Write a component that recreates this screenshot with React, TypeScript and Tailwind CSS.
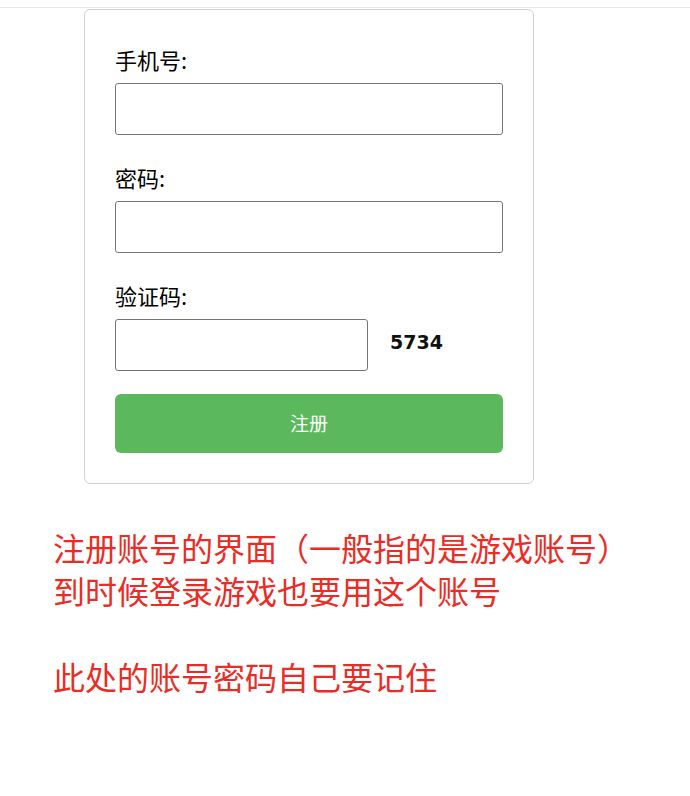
import React, { useState } from 'react';

const Field = ({ label, value, onChange, className }: { label: string; value: string; onChange: (v: string) => void; className?: string }) => (
  <div className={className}>
    <label className="block text-[22px] leading-[28px] text-black">{label}</label>
    <input
      type="text"
      value={value}
      onChange={e => onChange(e.target.value)}
      className="mt-[10px] block w-full h-[52px] px-2 border border-[#767676] rounded-[3px] outline-none"
    />
  </div>
);

export default function App() {
  const [form, setForm] = useState({ phone: '', password: '', code: '' });

  return (
    <div className="min-h-[796px] bg-white" style={{ fontFamily: '"Noto Sans CJK SC", "Noto Sans", sans-serif' }}>
      <div className="h-[8px] border-b border-[#e6e6e6]" />
      <div className="ml-[84px] mt-[1px] w-[450px] border border-[#d0d0d0] rounded-[6px] px-[30px] pt-[35px] pb-[30px]">
        <Field label="手机号:" value={form.phone} onChange={v => setForm({ ...form, phone: v })} />
        <Field label="密码:" value={form.password} onChange={v => setForm({ ...form, password: v })} className="mt-[28px]" />

        <div className="mt-[28px]">
          <label className="block text-[22px] leading-[28px] text-black">验证码:</label>
          <div className="mt-[10px] flex items-center">
            <input
              type="text"
              value={form.code}
              onChange={e => setForm({ ...form, code: e.target.value })}
              className="block w-[253px] h-[52px] px-2 border border-[#767676] rounded-[3px] outline-none"
            />
            <span className="ml-[22px] mb-[6px] text-[19px] font-bold text-[#111]" style={{ fontFamily: '"DejaVu Sans", sans-serif' }}>5734</span>
          </div>
        </div>

        <button className="mt-[23px] w-full h-[59px] bg-[#5cb85c] text-white text-[19px] rounded-[6px]">注册</button>
      </div>

      <div className="mt-[42px] ml-[53px] text-[32px] leading-[43px] text-[#ec2b25]">
        <p>注册账号的界面（一般指的是游戏账号）</p>
        <p>到时候登录游戏也要用这个账号</p>
        <p className="mt-[43px]">此处的账号密码自己要记住</p>
      </div>
    </div>
  );
}
